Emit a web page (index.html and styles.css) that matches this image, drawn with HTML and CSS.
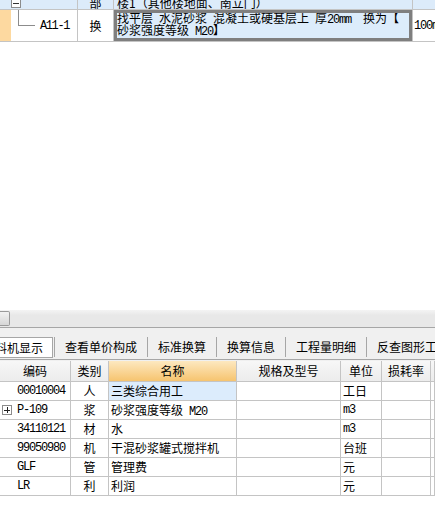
FILE: index.html
```html
<!DOCTYPE html>
<html>
<head>
<meta charset="utf-8">
<link rel="stylesheet" href="styles.css">
</head>
<body>
<section class="tree">
  <div class="trow r1">
    <div class="c strip"></div>
    <div class="c code"><span class="expander"><span class="bar"></span></span></div>
    <div class="c kind">部</div>
    <div class="c name">楼1（其他楼地面、南立门）</div>
    <div class="c qty"></div>
  </div>
  <div class="trow r2">
    <div class="c strip sel"></div>
    <div class="c code"><span class="branch"></span><span class="mono">A11-1</span></div>
    <div class="c kind">换</div>
    <div class="c name"><div class="editor">找平层&ensp;水泥砂浆&ensp;混凝土或硬基层上&ensp;厚<span class="mono">20mm</span>&ensp;&ensp;换为【<br>砂浆强度等级&ensp;<span class="mono">M20</span>】</div></div>
    <div class="c qty"><span class="mono">100m</span></div>
  </div>
</section>

<div class="hscroll"><div class="thumb"></div></div>

<nav class="tabs">
  <div class="tab active">工料机显示</div>
  <div class="tab">查看单价构成</div>
  <div class="tab">标准换算</div>
  <div class="tab">换算信息</div>
  <div class="tab">工程量明细</div>
  <div class="tab">反查图形工程量</div>
</nav>
<div class="spacer"></div>

<div class="grid">
  <div class="h">编码</div><div class="h">类别</div><div class="h hot">名称</div><div class="h">规格及型号</div><div class="h">单位</div><div class="h">损耗率</div><div class="h"></div>

  <div class="d code mono">00010004</div><div class="d cat">人</div><div class="d nm cur">三类综合用工</div><div class="d"></div><div class="d un">工日</div><div class="d"></div><div class="d"></div>

  <div class="d code plus"><span class="pbox"><span class="ph"></span><span class="pv"></span></span><span class="mono">P-109</span></div><div class="d cat">浆</div><div class="d nm">砂浆强度等级&ensp;<span class="mono">M20</span></div><div class="d"></div><div class="d un mono">m3</div><div class="d"></div><div class="d"></div>

  <div class="d code mono">34110121</div><div class="d cat">材</div><div class="d nm">水</div><div class="d"></div><div class="d un mono">m3</div><div class="d"></div><div class="d"></div>

  <div class="d code mono">99050980</div><div class="d cat">机</div><div class="d nm">干混砂浆罐式搅拌机</div><div class="d"></div><div class="d un">台班</div><div class="d"></div><div class="d"></div>

  <div class="d code mono">GLF</div><div class="d cat">管</div><div class="d nm">管理费</div><div class="d"></div><div class="d un">元</div><div class="d"></div><div class="d"></div>

  <div class="d code mono">LR</div><div class="d cat">利</div><div class="d nm">利润</div><div class="d"></div><div class="d un">元</div><div class="d"></div><div class="d"></div>
</div>
</body>
</html>
```

FILE: styles.css
```css
* { box-sizing: border-box; }
html, body { margin: 0; padding: 0; }
body {
  width: 435px;
  height: 505px;
  overflow: hidden;
  background: #ffffff;
  font-family: "Noto Sans CJK SC", "Noto Sans", sans-serif;
  font-size: 12px;
  color: #000;
}
.mono {
  font-family: "Liberation Mono", "DejaVu Sans Mono", monospace;
  font-size: 12px;
  letter-spacing: -1.2px;
}

/* ---------- top tree grid ---------- */
.tree { height: 310px; overflow: hidden; }
.trow {
  display: grid;
  grid-template-columns: 11px 67px 36px 299px 1fr;
  border-bottom: 1px solid #c4c4c4;
}
.trow .c { display: flex; align-items: center; white-space: nowrap; overflow: hidden; }
.trow .code, .trow .kind, .trow .name { border-right: 1px solid #c4c4c4; }
.trow .kind { justify-content: center; }
.r1 { height: 21px; margin-top: -11px; background: #dcebfa; }
.r1 .c { align-items: flex-end; line-height: 13px; }
.r1 .name { padding-left: 3px; }
.r2 { height: 32px; }
.strip.sel { background: #fdd9a0; }
.expander {
  width: 10px; height: 10px;
  border: 1px solid #8c8c8c;
  background: #fff;
  margin-bottom: 1px;
  display: flex; align-items: center; justify-content: center;
}
.expander .bar { width: 6px; height: 1px; background: #333; }
.r2 .code { align-items: flex-start; }
.branch {
  width: 17px; height: 16px;
  margin-left: 7px;
  border-left: 1px solid #8c8c8c;
  border-bottom: 1px solid #8c8c8c;
  flex: none;
}
.r2 .code .mono { margin-left: 5px; align-self: center; letter-spacing: -1.4px; }
.r2 .name { padding: 0; align-items: stretch; }
.editor {
  flex: 1;
  border: 3px solid #7f7f7f;
  background: #dcecfb;
  line-height: 10px;
  padding-top: 0;
  white-space: nowrap;
  overflow: hidden;
}
.qty { padding-left: 1px; }

/* ---------- horizontal scrollbar ---------- */
.hscroll {
  height: 17px;
  background: linear-gradient(#f4f4f4, #e8e8e8 30%, #e8e8e8);
  padding-top: 1px;
}
.thumb {
  width: 10px; height: 15px;
  border: 1px solid #9a9a9a;
  border-left: none;
  border-radius: 0 2px 2px 0;
  background: linear-gradient(#f2f2f2, #d6d6d6);
}

/* ---------- tabs ---------- */
.tabs {
  height: 33px;
  border-top: 1px solid #a6a6a6;
  border-bottom: 1px solid #a6a6a6;
  background: #f0f0f0;
  display: flex;
  align-items: flex-start;
  padding-top: 9px;
  white-space: nowrap;
}
.tab {
  height: 20px;
  line-height: 20px;
  padding: 0 10px;
  border-left: 1px solid #a6a6a6;
  flex: none;
}
.tab.active {
  height: 21px;
  margin-left: -26px;
  margin-right: 1px;
  padding: 0 9px 0 8px;
  background: #fff;
  border: 1px solid #a6a6a6;
  line-height: 19px;
}
.spacer { height: 1px; background: #f0f0f0; }

/* ---------- bottom grid ---------- */
.grid {
  display: grid;
  grid-template-columns: 71px 38px 128px 104px 41px 49px 1fr;
  grid-template-rows: 21px;
  grid-auto-rows: 19px;
}
.grid > div {
  border-right: 1px solid #c4c4c4;
  border-bottom: 1px solid #c4c4c4;
  white-space: nowrap;
  overflow: hidden;
  line-height: 18px;
}
.h {
  text-align: center;
  line-height: 20px !important;
  background: linear-gradient(#f7f7f7, #ececec);
}
.h.hot { background: linear-gradient(#fde8c0, #f6c46f); }
.d.code { padding-left: 17px; }
.d.code.plus { padding-left: 2px; display: flex; align-items: center; }
.pbox {
  width: 10px; height: 10px;
  border: 1px solid #8c8c8c;
  background: #fff;
  position: relative;
  margin-right: 5px;
  flex: none;
}
.ph { position: absolute; left: 1px; top: 4px; width: 6px; height: 1px; background: #222; }
.pv { position: absolute; left: 4px; top: 1px; width: 1px; height: 6px; background: #222; }
.d.cat { text-align: center; }
.d.nm { padding-left: 2px; }
.d.nm.cur { background: #dcecfc; }
.d.un { padding-left: 2px; }
```
